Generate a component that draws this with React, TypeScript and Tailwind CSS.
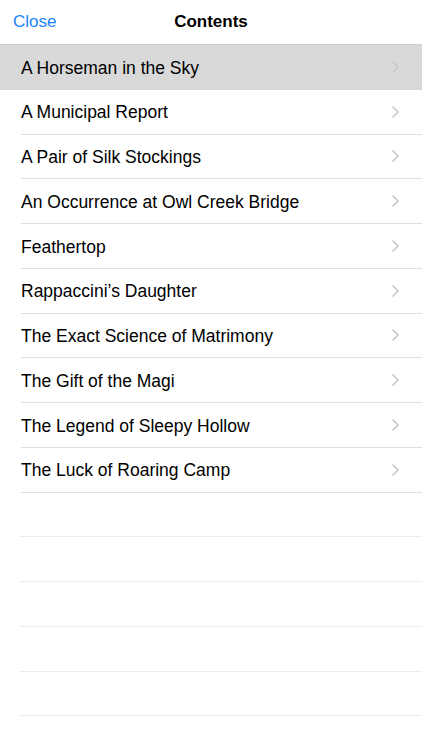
import React from 'react';

const stories = [
  'A Horseman in the Sky',
  'A Municipal Report',
  'A Pair of Silk Stockings',
  'An Occurrence at Owl Creek Bridge',
  'Feathertop',
  'Rappaccini\u2019s Daughter',
  'The Exact Science of Matrimony',
  'The Gift of the Magi',
  'The Legend of Sleepy Hollow',
  'The Luck of Roaring Camp',
];

const Chevron: React.FC = () => (
  <svg width="9" height="14" viewBox="0 0 9 14" className="shrink-0">
    <path d="M1.5 1.5L7 7l-5.5 5.5" fill="none" stroke="#c7c7cc" strokeWidth="1.6" />
  </svg>
);

const App: React.FC = () => {
  return (
    <div className="w-[422px] h-[750px] bg-white overflow-hidden font-['Liberation_Sans',Arial,sans-serif] text-black">
      <header className="relative h-[45px] flex items-center justify-center border-b border-[#cfcfd2] bg-white">
        <span className="absolute left-[13px] text-[17px] text-[#1a82fb]">Close</span>
        <span className="text-[17px] font-bold">Contents</span>
      </header>
      <ul>
        {stories.map((title, i) => (
          <li
            key={title}
            className={`h-[44.75px] pl-[21px] ${i === 0 ? 'bg-[#d9d9d9]' : ''}`}
          >
            <div
              className={`h-full flex items-center pr-[22px] ${i === 0 ? '' : 'border-b border-[#e0e0e3]'}`}
            >
              <span className="flex-1 text-[17.5px] leading-none pt-[3px]">{title}</span>
              <Chevron />
            </div>
          </li>
        ))}
        {Array.from({ length: 5 }).map((_, i) => (
          <li key={i} className="h-[44.75px] pl-[20px]">
            <div className="h-full border-b border-[#ececee]" />
          </li>
        ))}
      </ul>
    </div>
  );
};

export default App;
